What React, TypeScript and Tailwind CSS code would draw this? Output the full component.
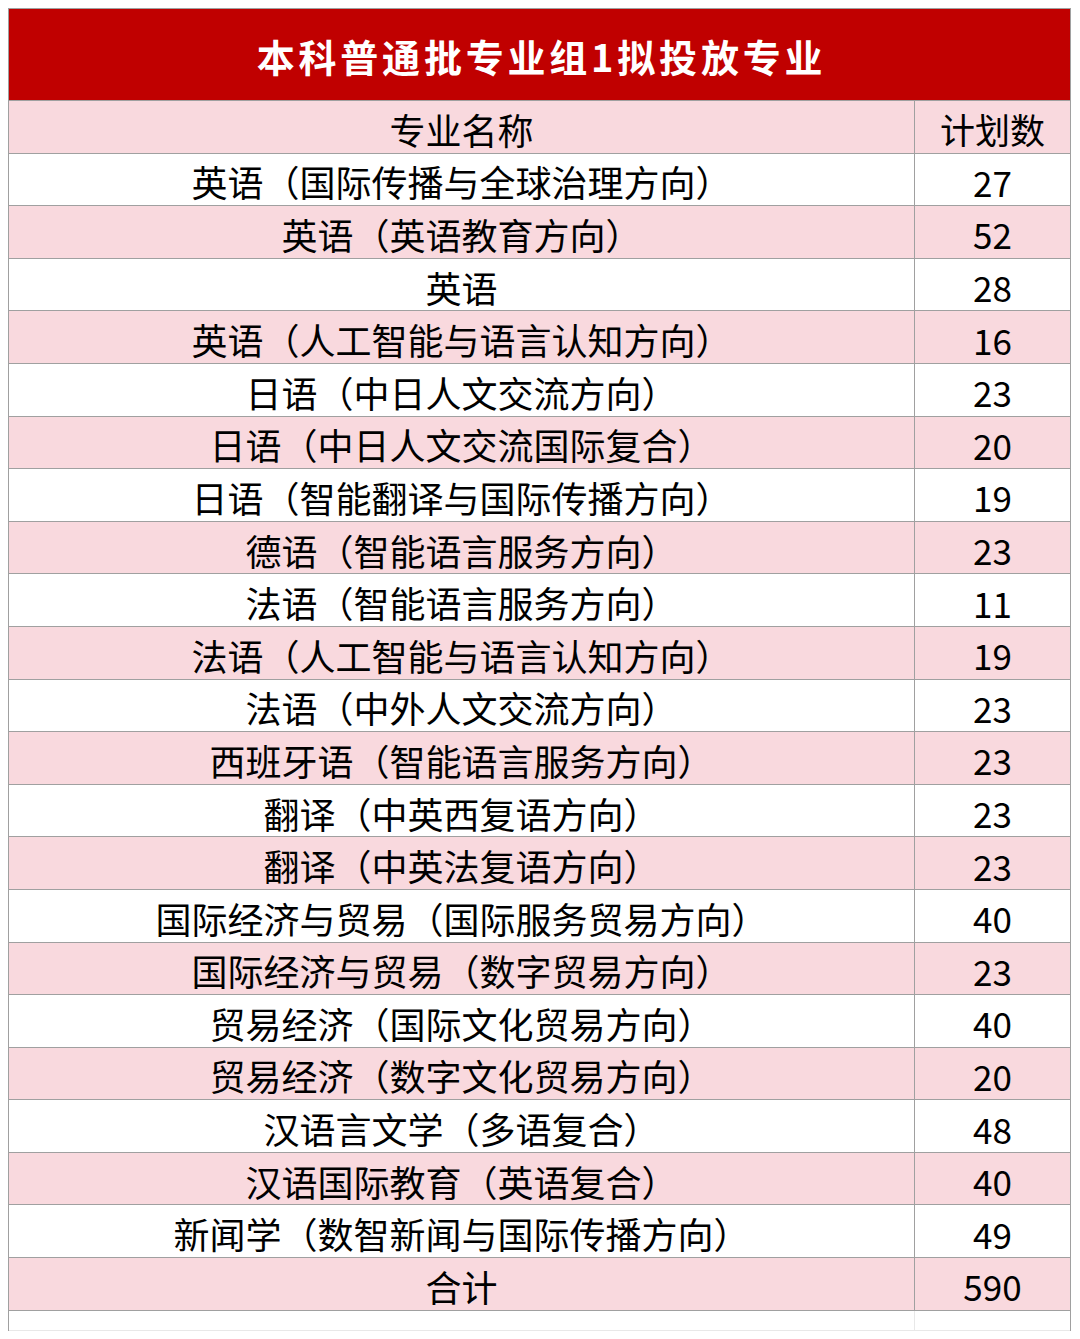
const rows: [string, string][] = [
  ["英语（国际传播与全球治理方向）", "27"],
  ["英语（英语教育方向）", "52"],
  ["英语", "28"],
  ["英语（人工智能与语言认知方向）", "16"],
  ["日语（中日人文交流方向）", "23"],
  ["日语（中日人文交流国际复合）", "20"],
  ["日语（智能翻译与国际传播方向）", "19"],
  ["德语（智能语言服务方向）", "23"],
  ["法语（智能语言服务方向）", "11"],
  ["法语（人工智能与语言认知方向）", "19"],
  ["法语（中外人文交流方向）", "23"],
  ["西班牙语（智能语言服务方向）", "23"],
  ["翻译（中英西复语方向）", "23"],
  ["翻译（中英法复语方向）", "23"],
  ["国际经济与贸易（国际服务贸易方向）", "40"],
  ["国际经济与贸易（数字贸易方向）", "23"],
  ["贸易经济（国际文化贸易方向）", "40"],
  ["贸易经济（数字文化贸易方向）", "20"],
  ["汉语言文学（多语复合）", "48"],
  ["汉语国际教育（英语复合）", "40"],
  ["新闻学（数智新闻与国际传播方向）", "49"],
];

const font = { fontFamily: '"Noto Sans CJK SC", "Noto Sans", sans-serif' };

function Row({ name, num, pink }: { name: string; num: string; pink: boolean }) {
  const bg = pink ? "bg-[#f9d9de]" : "bg-white";
  return (
    <div className={`flex h-[52.6px] border-b border-[#a0a0a0] ${bg}`}>
      <div className="flex w-[906px] items-center justify-center border-r border-[#a0a0a0] pt-[4px] text-[36px] leading-none text-black">
        {name}
      </div>
      <div className="flex flex-1 items-center justify-center pt-[4px] text-[35px] leading-none text-black">
        {num}
      </div>
    </div>
  );
}

export default function App() {
  return (
    <div className="min-h-[1339px] w-[1080px] bg-white pl-[8px] pt-[8px]" style={font}>
      <div className="w-[1063px] border-l border-r border-t border-[#a0a0a0]">
        <div className="flex h-[92px] items-center justify-center border-b border-[#a0a0a0] bg-[#c00000] pl-[4px] pt-[2px] text-[38px] font-bold tracking-[0.1em] text-white">
          本科普通批专业组1拟投放专业
        </div>
        <Row name="专业名称" num="计划数" pink />
        {rows.map(([n, c], i) => (
          <Row key={n} name={n} num={c} pink={i % 2 === 1} />
        ))}
        <Row name="合计" num="590" pink />
        <div className="flex h-[20px] border-b border-[#e8e8e8]">
          <div className="w-[906px] border-r border-[#e8e8e8]" />
          <div className="flex-1" />
        </div>
      </div>
    </div>
  );
}
